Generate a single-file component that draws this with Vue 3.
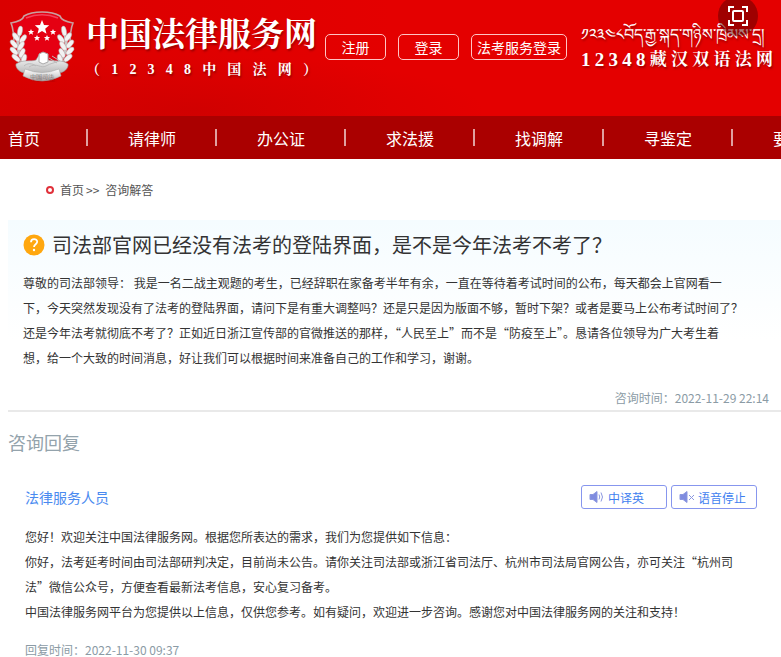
<script setup>
    import {ref} from 'vue'

    const navItems = ref(['首页', '请律师', '办公证', '求法援', '找调解', '寻鉴定', '要'])

    const subtitle = [...'（12348中国法网）']
    const digits = [...'12348']
    const tibetSite = [...'藏汉双语法网']

    const question = [
        '尊敬的司法部领导： 我是一名二战主观题的考生，已经辞职在家备考半年有余，一直在等待着考试时间的公布，每天都会上官网看一',
        '下，今天突然发现没有了法考的登陆界面，请问下是有重大调整吗？还是只是因为版面不够，暂时下架？或者是要马上公布考试时间了？',
        '还是今年法考就彻底不考了？正如近日浙江宣传部的官微推送的那样，“人民至上”而不是“防疫至上”。恳请各位领导为广大考生着',
        '想，给一个大致的时间消息，好让我们可以根据时间来准备自己的工作和学习，谢谢。'
    ]

    const reply = [
        '您好！欢迎关注中国法律服务网。根据您所表达的需求，我们为您提供如下信息：',
        '你好，法考延考时间由司法部研判决定，目前尚未公告。请你关注司法部或浙江省司法厅、杭州市司法局官网公告，亦可关注“杭州司',
        '法”微信公众号，方便查看最新法考信息，安心复习备考。',
        '中国法律服务网平台为您提供以上信息，仅供您参考。如有疑问，欢迎进一步咨询。感谢您对中国法律服务网的关注和支持！'
    ]

    // laurel leaves, mirrored on the other side
    const leaves = [
        {x: 11, y: 21, r: 10}, {x: 7, y: 27, r: -35}, {x: 14, y: 29, r: 35},
        {x: 5, y: 34, r: -40}, {x: 12, y: 36, r: 30}, {x: 5, y: 41, r: -45},
        {x: 13, y: 43, r: 25}, {x: 7, y: 48, r: -50}, {x: 15, y: 49, r: 15}
    ]
</script>

<template>
    <div class="page">
        <header class="header">
            <div class="brand">
                <svg class="emblem" viewBox="0 0 66 72" aria-hidden="true">
                    <defs>
                        <linearGradient id="silver" x1="0" y1="0" x2="0" y2="1">
                            <stop offset="0" stop-color="#ffffff" />
                            <stop offset="1" stop-color="#b9b9b9" />
                        </linearGradient>
                    </defs>
                    <path d="M33 2C26 2 20 3 15 6C14 10 8 12 2 13C5 20 5 28 5 36C5 49 17 58 33 66C49 58 61 49 61 36C61 28 61 20 64 13C58 12 52 10 51 6C46 3 40 2 33 2Z" fill="#e50012" stroke="#c9a0a0" stroke-width="1.6" />
                    <path d="M17 8C27 4 39 4 49 8" fill="none" stroke="#f4405a" stroke-width="1.6" />
                    <path d="M33 10l2 5 5.2.3-4 3.4 1.3 5.1-4.5-2.900-4.500 2.900 1.300-5.100-4-3.400 5.200-.3z" fill="#fff" />
                    <path v-for="s in [[22, 22], [44, 22], [28, 28], [38, 28]]" :key="s[0]" :transform="`translate(${s[0]} ${s[1]})`" d="M0-3l.9 2 2.2.1-1.700 1.400.6 2.200L0 1.500l-2 1.200.6-2.200L-3.100-.9l2.200-.1z" fill="#fff" />
                    <g v-for="side in [1, -1]" :key="side" :transform="side === 1 ? '' : 'translate(66 0) scale(-1 1)'">
                        <path d="M11 21C7 33 8 46 20 57" fill="none" stroke="#c9c9c9" stroke-width="3" />
                        <ellipse v-for="l in leaves" :key="l.x + '-' + l.y" :cx="l.x" :cy="l.y" rx="2.4" ry="5" :transform="`rotate(${l.r} ${l.x} ${l.y})`" fill="#f3f3f3" stroke="#b5a5a5" stroke-width=".5" />
                    </g>
                    <path d="M7 54C14 49 22 52 27 50L30 45H37L39 50C45 52 53 49 59 54C60 58 55 63 49 63H17C11 63 6 58 7 54Z" fill="url(#silver)" stroke="#999" stroke-width=".6" />
                    <path d="M30 44l4-2 5 2v8l-5 2-4-2z" fill="#fff" stroke="#aaa" />
                    <path d="M20 57c7-5 12 2 17-1s9-3 13-5M40 48l8 5M43 46l8 5M15 56c3-3 8-3 12 0" fill="none" stroke="#bbb" />
                    <path d="M16 59Q33 66 50 59L52 66Q33 76 14 66Z" fill="url(#silver)" stroke="#aaa" stroke-width=".6" />
                    <text x="33" y="69" text-anchor="middle" class="emblem-text">中国司法</text>
                </svg>
                <div class="brand-text">
                    <h1>中国法律服务网</h1>
                    <p class="spread"><span v-for="(c, i) in subtitle" :key="i">{{ c }}</span></p>
                </div>
            </div>
            <div class="account">
                <button type="button">注册</button>
                <button type="button">登录</button>
                <button type="button" class="wide">法考服务登录</button>
            </div>
            <div class="tibet">
                <p class="tibetan" lang="bo">༡༢༣༤༨བོད་རྒྱ་སྐད་གཉིས་ཁྲིམས་དྲ།</p>
                <p class="tibet-name">
                    <span v-for="d in digits" :key="d" class="digit">{{ d }}</span>
                    <span v-for="c in tibetSite" :key="c">{{ c }}</span>
                </p>
            </div>
            <button type="button" class="scan" aria-label="全屏">
                <svg viewBox="0 0 20 20" fill="none" stroke="#fff" stroke-width="2">
                    <path d="M1 6V1H6M14 1H19V6M19 14V19H14M6 19H1V14" />
                    <rect x="5" y="5" width="10" height="10" rx="1" />
                </svg>
            </button>
        </header>

        <nav class="nav">
            <a v-for="item in navItems" :key="item" href="#">{{ item }}</a>
        </nav>

        <div class="crumbs">
            <i class="dot"></i>
            <a href="#">首页</a>
            <span>&gt;&gt;</span>
            <span class="current">咨询解答</span>
        </div>

        <main>
            <section class="question">
                <h2>
                    <svg viewBox="0 0 22 22" aria-hidden="true">
                        <circle cx="11" cy="11" r="10.5" fill="#ffa70f" />
                        <path d="M8 8.3C8 4.200 14.200 4.300 14.200 7.800C14.200 10.200 11 10.300 11 13" fill="none" stroke="#fff" stroke-width="1.8" />
                        <circle cx="11" cy="16" r="1.200" fill="#fff" />
                    </svg>
                    司法部官网已经没有法考的登陆界面，是不是今年法考不考了？
                </h2>
                <p class="content"><span v-for="line in question" :key="line">{{ line }}</span></p>
                <p class="time">咨询时间：2022-11-29 22:14</p>
            </section>

            <h3>咨询回复</h3>

            <section class="reply">
                <div class="reply-head">
                    <h4>法律服务人员</h4>
                    <button type="button">
                        <svg viewBox="0 0 16 14" fill="none" stroke="#8b97e0">
                            <path d="M1 4.500H4L8 1.500V12.500L4 9.500H1Z" fill="#7f8cdf" />
                            <path d="M10 4.500Q11.500 7 10 9.500M12 2.500Q15 7 12 11.500" />
                        </svg>
                        中译英
                    </button>
                    <button type="button">
                        <svg viewBox="0 0 16 14" fill="none" stroke="#8b97e0">
                            <path d="M1 4.500H4L8 1.500V12.500L4 9.500H1Z" fill="#7f8cdf" />
                            <path d="M10 5L15 10M15 5L10 10" />
                        </svg>
                        语音停止
                    </button>
                </div>
                <p class="content"><span v-for="line in reply" :key="line">{{ line }}</span></p>
                <p class="time">回复时间：2022-11-30 09:37</p>
            </section>
        </main>
    </div>
</template>

<style>
    body {
        margin: 0;
        background: #fff;
    }
</style>

<style scoped>
    .page {
        font-family: "Noto Sans CJK SC", "Liberation Sans", sans-serif;
        color: #333;
        overflow: hidden;
    }

    h1, h2, h3, h4, p {
        margin: 0;
        font-weight: normal;
    }

    a {
        color: inherit;
        text-decoration: none;
    }

    button {
        font-family: inherit;
        cursor: pointer;
    }

    .header {
        position: relative;
        display: flex;
        align-items: flex-start;
        height: 116px;
        padding: 0 8px;
        box-sizing: border-box;
        color: #fff;
        background:
            radial-gradient(ellipse at 25% 95%, rgba(150, 0, 0, .2), transparent 35%),
            linear-gradient(90deg, #da0000, #e40000 50%);
    }

    .brand {
        display: flex;
        gap: 10px;
        padding-top: 10px;
        font-family: "Liberation Serif", "Noto Serif CJK SC", "Noto Sans CJK SC", serif;
        text-shadow: 1px 2px 2px rgba(90, 0, 0, .5);
    }

    .emblem {
        width: 68px;
        height: 72px;
    }

    .emblem-text {
        font-size: 6px;
        fill: #777;
    }

    h1 {
        font-size: 33px;
        line-height: 50px;
        font-weight: bold;
    }

    .spread {
        display: flex;
        justify-content: space-between;
        font-size: 14px;
        line-height: 20px;
        font-weight: bold;
    }

    .account {
        display: flex;
        gap: 12px;
        margin-left: 8px;
        padding-top: 34px;
    }

    .account button {
        width: 61px;
        height: 26px;
        padding: 0;
        border: 1px solid #ffc4c4;
        border-radius: 5px;
        background: none;
        color: #fff;
        font-size: 14px;
        line-height: 24px;
        white-space: nowrap;
    }

    .account .wide {
        width: 96px;
    }

    .tibet {
        width: 192px;
        margin-left: auto;
        padding-top: 22px;
        font-family: "Liberation Serif", "Noto Serif CJK SC", "Noto Sans CJK SC", serif;
        text-shadow: 1px 2px 2px rgba(90, 0, 0, .5);
    }

    .tibetan {
        font-size: 16px;
        line-height: 26px;
        white-space: nowrap;
    }

    .tibet-name {
        display: flex;
        justify-content: space-between;
        font-size: 17px;
        line-height: 24px;
        font-weight: bold;
    }

    .digit {
        font-size: 19px;
    }

    .scan {
        position: absolute;
        top: -4px;
        right: 23px;
        width: 40px;
        height: 40px;
        padding: 10px;
        border: 0;
        border-radius: 50%;
        background: rgba(90, 0, 0, .5);
    }

    .scan svg {
        display: block;
        width: 20px;
        height: 20px;
    }

    .nav {
        display: flex;
        height: 43px;
        background: #a00;
        color: #fff;
        font-size: 16px;
        line-height: 42px;
    }

    .nav a {
        display: flex;
        flex-shrink: 0;
        align-items: center;
        gap: 39px;
        padding-left: 40px;
    }

    .nav a:first-child {
        gap: 46px;
        padding-left: 8px;
    }

    .nav a:not(:last-child)::after {
        content: "";
        width: 2px;
        height: 17px;
        background: #e0a0a0;
    }

    .crumbs {
        display: flex;
        align-items: center;
        height: 61px;
        padding-left: 46px;
        font-size: 12px;
        color: #555;
    }

    .crumbs a {
        margin-right: 2px;
    }

    .crumbs .current {
        margin-left: 6px;
    }

    .dot {
        width: 4px;
        height: 4px;
        margin-right: 6px;
        border: 2px solid #e0303a;
        border-radius: 50%;
    }

    main {
        padding-left: 8px;
    }

    .question {
        padding: 8px 12px 0 15px;
        border-bottom: 2px solid #e9e9e9;
        background: linear-gradient(#f5fcff, #fff 120px);
    }

    h2 {
        display: flex;
        align-items: center;
        gap: 7px;
        font-size: 20px;
        line-height: 34px;
        white-space: nowrap;
    }

    h2 svg {
        flex-shrink: 0;
        width: 22px;
        height: 22px;
    }

    .content {
        font-size: 12px;
        line-height: 25px;
    }

    .content span {
        display: block;
        white-space: nowrap;
    }

    .question .content {
        margin: 8px 0 15px;
    }

    .time {
        font-size: 12px;
        line-height: 25px;
        color: #8b9ba5;
    }

    .question .time {
        text-align: right;
    }

    h3 {
        margin-top: 16px;
        font-size: 18px;
        line-height: 28px;
        color: #94a3ac;
    }

    .reply {
        padding: 28px 24px 0 17px;
    }

    .reply-head {
        display: flex;
        align-items: center;
        gap: 4px;
    }

    h4 {
        margin-right: auto;
        font-size: 14px;
        line-height: 26px;
        color: #4a8af0;
    }

    .reply-head button {
        display: flex;
        align-items: center;
        gap: 3px;
        width: 86px;
        height: 24px;
        padding: 0 7px;
        border: 1px solid #8796ee;
        border-radius: 3px;
        background: #fff;
        color: #3f7ff0;
        font-size: 12px;
        white-space: nowrap;
    }

    .reply-head svg {
        width: 16px;
        height: 14px;
    }

    .reply .content {
        margin: 14px 0 13px;
    }
</style>
